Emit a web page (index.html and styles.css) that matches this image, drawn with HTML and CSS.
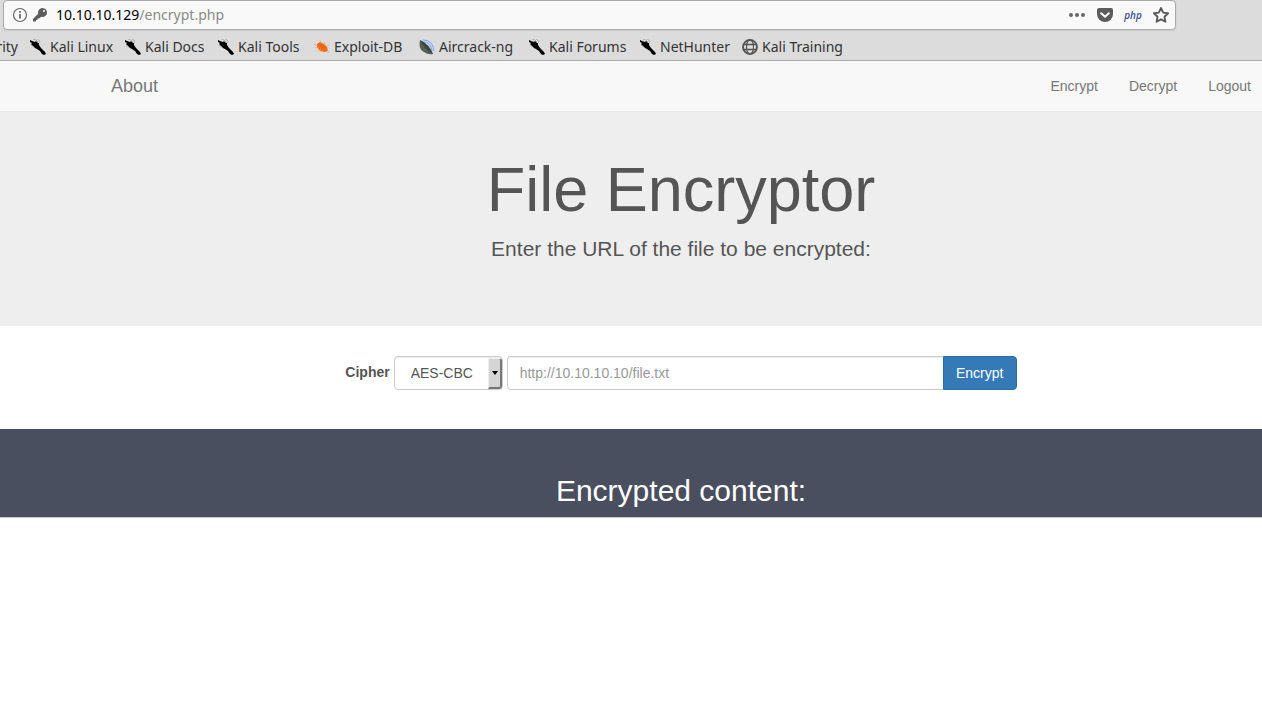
FILE: index.html
```html
<!DOCTYPE html>
<html lang="en">
<head>
<meta charset="utf-8">
<title>File Encryptor</title>
<link rel="stylesheet" href="styles.css">
</head>
<body>
<svg class="symbols" aria-hidden="true">
  <symbol id="dragon" viewBox="0 0 16 16">
    <path d="M0 1 2 2 5 3 6 2 8 4 9 4 9 6 11 9 13 11 15 13 16 15 14 16 12 15 10 12 7 10 5 9 3 7 1 5 2 4 0 3Z"/>
    <path d="M3 0 6 1 8 3M7 0 10 2 9 4M1 6 4 8" fill="none" stroke="#888" stroke-width=".5"/>
  </symbol>
</svg>
<header class="browser">
  <div class="urlbar">
    <svg class="icon" viewBox="0 0 16 16" fill="none" stroke="#666"><circle cx="8" cy="8" r="6.5" stroke-width="1.2"/><path d="M8 7v4.500M8 4v1.700" stroke-width="1.700"/></svg>
    <svg class="icon" viewBox="0 0 16 16" fill="#5c5c5c"><path fill-rule="evenodd" d="M10.500 1a4.500 4.500 0 0 0-4.300 5.800L1 12v2.500h3V13h1.500v-1.500H7L9.200 9.800A4.500 4.500 0 1 0 10.500 1ZM12 3a1 1 0 1 1 0 2 1 1 0 0 1 0-2Z"/></svg>
    <span class="address"><span class="host">10.10.10.129</span>/encrypt.php</span>
    <span class="actions">
      <svg class="icon" viewBox="0 0 16 16" fill="#666"><circle cx="2" cy="8" r="2"/><circle cx="8" cy="8" r="2"/><circle cx="14" cy="8" r="2"/></svg>
      <svg class="icon" viewBox="0 0 16 16"><path d="M2 1h12q2 0 2 2v4a8 8 0 0 1-16 0V3q0-2 2-2Z" fill="#5c5c5c"/><path d="m4.200 6.200 3.800 3.600 3.800-3.600" fill="none" stroke="#f9f9f9" stroke-width="2" stroke-linecap="round" stroke-linejoin="round"/></svg>
      <span class="php">php</span>
      <svg class="icon" viewBox="0 0 16 16"><path d="m8 1 2.200 4.600 4.900.6-3.600 3.500.9 5L8 12.300l-4.400 2.400.9-5L.9 6.200l4.900-.6Z" fill="none" stroke="#5c5c5c" stroke-width="1.900" stroke-linejoin="round"/></svg>
    </span>
  </div>
  <nav class="bookmarks">
    <a href="#">rity</a>
    <a href="#"><svg class="icon"><use href="#dragon"/></svg>Kali Linux</a>
    <a href="#"><svg class="icon"><use href="#dragon"/></svg>Kali Docs</a>
    <a href="#"><svg class="icon"><use href="#dragon"/></svg>Kali Tools</a>
    <a href="#"><svg class="icon" viewBox="0 0 16 16"><path d="M3 5 6 3l4 2 3 3 1 4-3 1-5-1-3-4Z" fill="#f26711"/><path d="m0 5 4 2M1 9l4-1M4 12l3-2M6 2l2 3M10 3l1 3M13 7l2-1M8 11v2M13 11l2 3" stroke="#f0a070" stroke-width=".8"/></svg>Exploit-DB</a>
    <a href="#"><svg class="icon" viewBox="0 0 16 16"><path d="M3 0q12-1 12 14L8 10Z" fill="#c5d6f2"/><path d="M4 1q10 0 11 11M4 3q8 0 9 9" fill="none" stroke="#8eabe0"/><path d="M1 1q-2 9 4 12 4 3 9 2Q10 6 1 1Z" fill="#566057"/><path d="M1 1q9 4 13 14Q5 10 1 1Z" fill="#3c453e"/></svg>Aircrack-ng</a>
    <a href="#"><svg class="icon"><use href="#dragon"/></svg>Kali Forums</a>
    <a href="#"><svg class="icon"><use href="#dragon"/></svg>NetHunter</a>
    <a href="#"><svg class="icon" viewBox="0 0 16 16" fill="none" stroke="#555"><circle cx="8" cy="8" r="7" stroke-width="1.900"/><ellipse cx="8" cy="8" rx="3.500" ry="7" stroke-width="1.200"/><path d="M1.500 5.500h13M1.500 10.500h13" stroke-width="1.400"/></svg>Kali Training</a>
  </nav>
</header>
<nav class="navbar">
  <a class="brand" href="#">About</a>
  <div class="links"><a href="#">Encrypt</a><a href="#">Decrypt</a><a href="#">Logout</a></div>
</nav>
<main>
  <section class="hero">
    <h1>File Encryptor</h1>
    <p>Enter the URL of the file to be encrypted:</p>
  </section>
  <form class="form">
    <label for="cipher">Cipher</label>
    <span class="select"><select id="cipher"><option>AES-CBC</option><option>RC4</option></select></span>
    <div class="group">
      <input type="text" aria-label="File URL" placeholder="http://10.10.10.10/file.txt">
      <button type="button">Encrypt</button>
    </div>
  </form>
  <section class="result"><h2>Encrypted content:</h2></section>
</main>
</body>
</html>
```

FILE: styles.css
```css
*, ::before, ::after { box-sizing: border-box; }
body {
  margin: 0;
  background: #fff;
  color: #555;
  font: 14px/20px "Liberation Sans", Arial, sans-serif;
  overflow-x: hidden;
}
a { color: inherit; text-decoration: none; }
.symbols { position: absolute; width: 0; height: 0; }
.icon { width: 16px; height: 16px; flex: none; }

.browser {
  background: #dcdcdc;
  border-bottom: 1px solid #aaa;
  font-family: "Noto Sans", sans-serif;
}
.urlbar {
  display: flex;
  align-items: center;
  gap: 4px;
  height: 30px;
  margin: 0 86px 0 3px;
  padding: 0 6px 0 8px;
  background: #f9f9f9;
  border: 1px solid #aaa;
  border-radius: 4px;
  box-shadow: 0 1px 2px #ccc;
}
.address { flex: 1; padding-left: 4px; color: #8a8a8a; }
.host { color: #000; }
.actions { display: flex; align-items: center; gap: 12px; }
.php {
  width: 16px;
  display: flex;
  justify-content: center;
  color: #414b91;
  font: italic 600 10px/16px "Open Sans", sans-serif;
}
.bookmarks {
  display: grid;
  grid-template-columns: 18px 83px 81px 84px 93px 98px 99px 90px 103px;
  gap: 12px;
  padding: 7px 0 3px;
  color: #333;
  white-space: nowrap;
}
.bookmarks a { display: flex; align-items: center; gap: 4px; }
.bookmarks a:first-child { justify-content: flex-end; }

.navbar {
  display: flex;
  align-items: center;
  justify-content: space-between;
  padding: 15px 11px 15px 111px;
  background: #f8f8f8;
  border-bottom: 1px solid #e7e7e7;
  color: #777;
}
.brand { font-size: 18px; line-height: 20px; }
.links { display: flex; gap: 31px; }

.hero {
  padding: 43px 0 62px 100px;
  background: #eee;
  text-align: center;
}
.hero h1 { margin: 0 0 10px; font-size: 63px; line-height: 69px; font-weight: 400; }
.hero p { margin: 0; font-size: 21px; line-height: 30px; }

.form {
  display: flex;
  justify-content: center;
  gap: 4px;
  padding: 30px 0 39px 100px;
}
.form label { font-weight: 700; line-height: 32px; }
.form select, .form input, .form button { height: 34px; font: inherit; }
.form select, .form input {
  background: #fff;
  border: 1px solid #ccc;
  border-radius: 4px;
  color: #555;
  box-shadow: inset 0 1px 1px #eee;
}
.select { position: relative; }
.select select { width: 109px; padding: 0 16px; appearance: none; }
.select::before {
  content: "";
  position: absolute;
  top: 2px;
  right: 1px;
  width: 14px;
  height: 31px;
  background: #d5d5d5;
  border: solid;
  border-width: 1px 2px 2px 1px;
  border-color: #eee #777 #777 #eee;
  border-radius: 0 3px 3px 0;
  pointer-events: none;
}
.select::after {
  content: "";
  position: absolute;
  top: 15px;
  right: 5px;
  border: 3px solid transparent;
  border-top: 4px solid #000;
  border-bottom: 0;
  pointer-events: none;
}
.group { display: flex; }
.group input { width: 437px; padding: 6px 12px; border-radius: 4px 0 0 4px; }
.group input::placeholder { color: #999; }
.form button {
  width: 74px;
  padding: 0;
  color: #fff;
  background: #337ab7;
  border: 1px solid #2e6da4;
  border-radius: 0 4px 4px 0;
}
.group input { border-right: 0; width: 436px; }

.result {
  padding: 45px 0 10px 100px;
  background: #494f5e;
  background-clip: padding-box;
  border-bottom: 1px solid #c4c4c8;
  color: #fff;
  text-align: center;
}
.result h2 { margin: 0; font-size: 30px; line-height: 33px; font-weight: 400; }
```
